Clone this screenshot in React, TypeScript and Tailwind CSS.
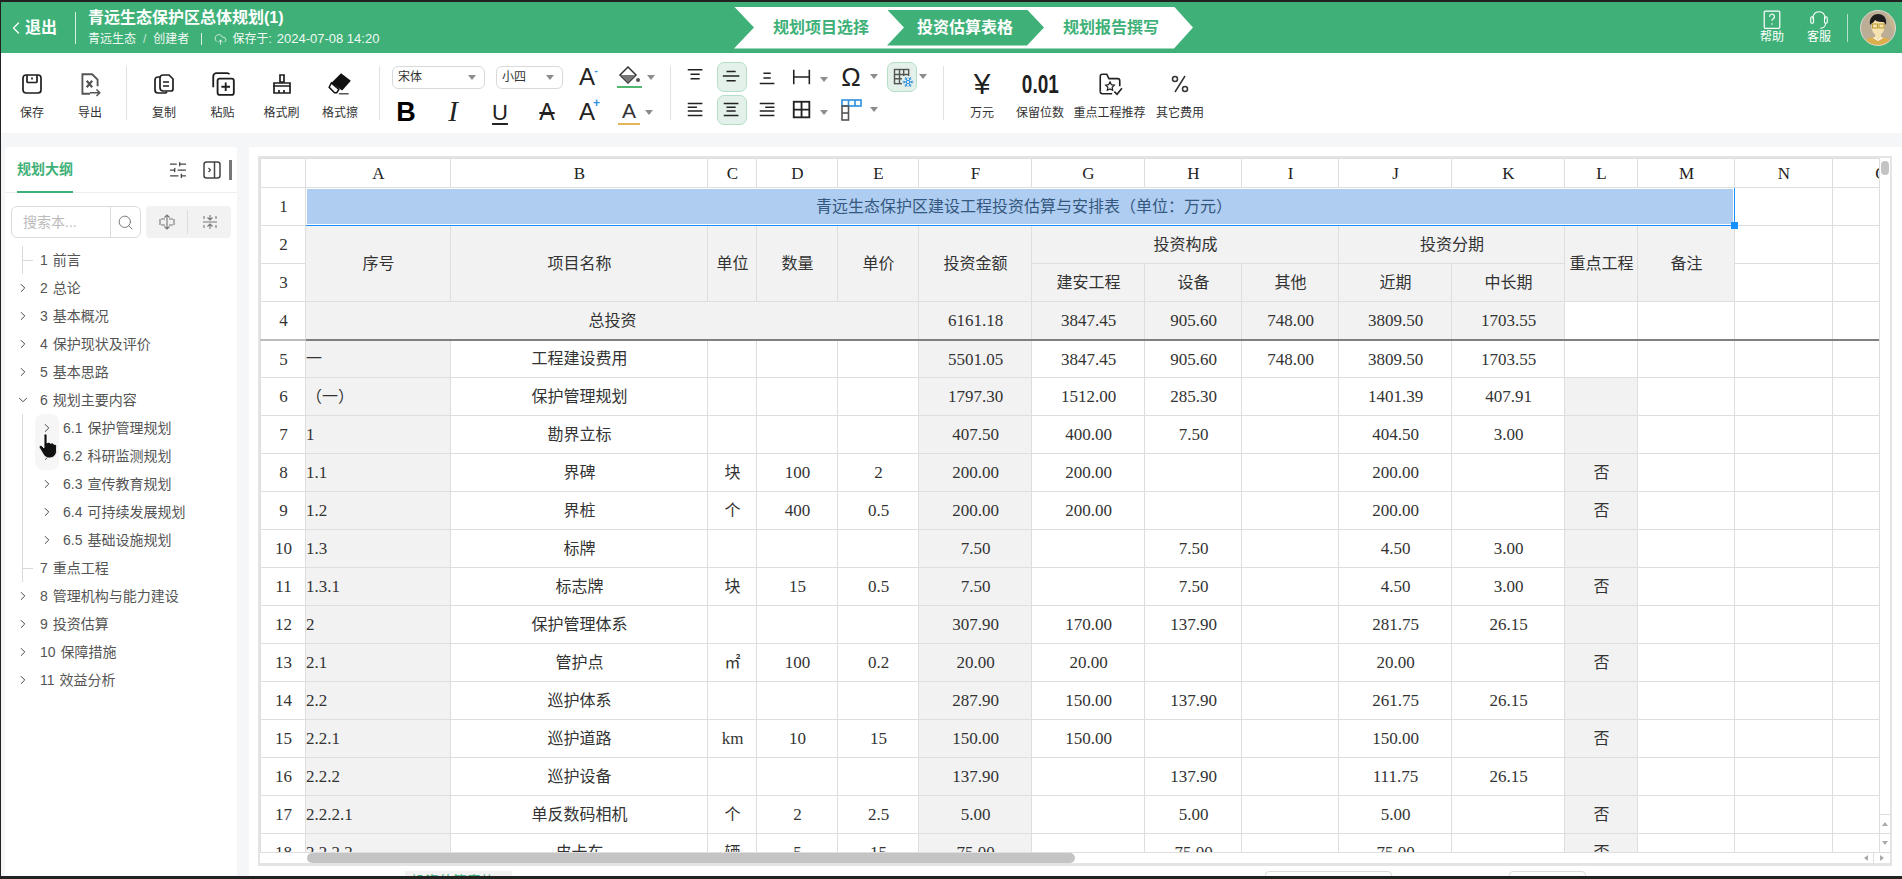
import React from 'react'
import { ChevronRight, ChevronDown, ChevronLeft, Search, SlidersHorizontal, Snowflake, CloudUpload } from 'lucide-react'

const sans = "[font-family:'Liberation_Sans','Noto_Sans_CJK_SC',sans-serif]"
const serif = "[font-family:'Liberation_Serif','Noto_Sans_CJK_SC',serif]"

function Ic({ size = 24, children, className = '' }: { size?: number; children: React.ReactNode; className?: string }) {
   return (
      <svg width={size} height={size} viewBox="0 0 24 24" fill="none" stroke="currentColor" strokeWidth={1.7} className={className}>
         {children}
      </svg>
   )
}

function Caret() {
   return <span className="inline-block h-0 w-0 border-x-[4px] border-t-[5px] border-x-transparent border-t-[#8c8c8c]" />
}

function ToolBtn({ label, width = 58, children }: { label: string; width?: number; children: React.ReactNode }) {
   return (
      <div className="mt-[5px] flex shrink-0 flex-col items-center" style={{ width }}>
         <div className="flex h-[28px] items-center justify-center text-[#1f1f1f]">{children}</div>
         <span className="mt-[7px] whitespace-nowrap text-[12px] leading-[16px] text-[#333]">{label}</span>
      </div>
   )
}

function Sep({ className = '' }: { className?: string }) {
   return <div className={'h-[54px] w-px shrink-0 bg-[#e2e2e2] ' + className} />
}

function FontSelect({ label, className }: { label: string; className: string }) {
   return (
      <div className={'flex h-[23px] items-center justify-between rounded-[6px] border border-[#d9d9d9] pl-[5px] pr-[8px] text-[12px] text-[#333] ' + className}>
         {label}
         <Caret />
      </div>
   )
}

function Letter({ children, className = '' }: { children: React.ReactNode; className?: string }) {
   return <span className={'flex h-[26px] w-[24px] items-center justify-center text-[#222] ' + className}>{children}</span>
}

function Header() {
   return (
      <div className="flex h-[51px] shrink-0 items-center bg-[#3fb178] text-white">
         <div className="flex w-[74px] items-center pl-[5px]">
            <ChevronLeft size={20} strokeWidth={1.5} className="-mr-[1px]" />
            <span className="text-[16px] font-bold">退出</span>
         </div>
         <div className="h-[32px] w-px bg-white/80" />
         <div className="ml-[12px] w-[646px]">
            <div className="text-[16px] font-bold leading-[20px]">青远生态保护区总体规划(1)</div>
            <div className="mt-[3px] flex items-center text-[12px] leading-[16px] text-white/95">
               青远生态<span className="mx-[7px] text-white/70">/</span>创建者
               <span className="ml-[12px] mr-[12px] h-[12px] w-px bg-white/80" />
               <CloudUpload size={13} strokeWidth={1.4} className="mr-[5px]" />
               保存于:<span className="ml-[5px] text-[13px]">2024-07-08 14:20</span>
            </div>
         </div>
         <div className="flex h-[42px] w-[459px] items-center bg-white text-[16px] font-semibold text-[#3fb178] [clip-path:polygon(0_0,440px_0,459px_50%,440px_100%,0_100%,20px_50%)]">
            <span className="w-[153px] pl-[39px]">规划项目选择</span>
            <span className="flex h-[36px] w-[157px] items-center bg-[#3fb178] pl-[30px] text-white [clip-path:polygon(0_0,140px_0,157px_50%,140px_100%,0_100%,17px_50%)]">投资估算表格</span>
            <span className="pl-[19px]">规划报告撰写</span>
         </div>
         <div className="ml-[557px] flex w-[44px] flex-col items-center">
            <svg width="20" height="20" viewBox="0 0 18 18" fill="none" stroke="white" strokeWidth="1.1">
               <rect x="2" y="1" width="14" height="15.500" rx="1" />
               <path d="M6.800 6a2.200 2.200 0 1 1 3.300 1.900c-.7.4-1.100.8-1.100 1.700" />
               <path d="M9 12v1.200" />
            </svg>
            <span className="text-[12px] leading-[15px]">帮助</span>
         </div>
         <div className="ml-[3px] flex w-[44px] flex-col items-center">
            <svg width="22" height="20" viewBox="0 0 20 18" fill="none" stroke="white" strokeWidth="1">
               <path d="M4.500 8c0-4 2.200-6.500 5.500-6.500S15.500 4 15.500 8" />
               <rect x="2.500" y="6" width="2.500" height="6" rx="1.200" />
               <rect x="15" y="6" width="2.500" height="6" rx="1.200" />
               <path d="M16 12c0 2.500-2 4.500-5 4.500" />
            </svg>
            <span className="text-[12px] leading-[15px]">客服</span>
         </div>
         <div className="ml-[6px] h-[28px] w-px bg-white/60" />
         <svg width="36" height="36" viewBox="0 0 36 36" className="ml-[12px]">
            <defs>
               <clipPath id="avatar-clip"><circle cx="18" cy="18" r="17.500" /></clipPath>
            </defs>
            <g clipPath="url(#avatar-clip)">
               <rect width="36" height="36" fill="#bcae96" />
               <path d="M24 0h12v26z" fill="#c7b68f" />
               <path d="M3 36c0-7 7-9 15-9s15 2 15 9z" fill="#dcae4c" />
               <path d="M15 22h6v6l-3 2-3-2z" fill="#f6e2ae" />
               <path d="M14 27l4 3 4-3 1 1-5 3-5-3z" fill="#fff" />
               <ellipse cx="18" cy="17" rx="6.500" ry="8" fill="#f6e2ae" />
               <path d="M10 15c-1-7 3-11 8-11 6 0 9 4 8 11l-2-3c-3 0-7 0-9-2-1 2-2 3-3 3z" fill="#1c1c1c" />
               <rect x="12.500" y="14" width="5" height="4" fill="none" stroke="#b99a2e" strokeWidth="1" />
               <rect x="19" y="14" width="5" height="4" fill="none" stroke="#b99a2e" strokeWidth="1" />
            </g>
            <circle cx="18" cy="18" r="17.500" fill="none" stroke="#d8d8d0" strokeWidth="1" />
         </svg>
      </div>
   )
}

function Toolbar() {
   return (
      <div className={'flex h-[80px] shrink-0 items-center bg-white pl-[2px]'}>
         <ToolBtn label="保存">
            <Ic size={24}>
               <rect x="3" y="3" width="18" height="18" rx="3" />
               <path d="M7 3v6.500a1 1 0 0 0 1 1h8a1 1 0 0 0 1-1V3" />
               <path d="M12 5.500v2" />
            </Ic>
         </ToolBtn>
         <ToolBtn label="导出">
            <Ic size={26} className="text-[#555]">
               <path d="M12 21H5V3h9l5 5v6" />
               <path d="M9 9l5 6M14 9l-5 6" strokeWidth={2} />
               <path d="M12 20h9M18 17l3 3-3 3" strokeWidth={1.4} />
            </Ic>
         </ToolBtn>
         <Sep className="ml-[7px] mr-[8px]" />
         <ToolBtn label="复制">
            <Ic size={24}>
               <path d="M8 5H6a3 3 0 0 0-3 3v10a3 3 0 0 0 3 3h7a3 3 0 0 0 2-1" />
               <path d="M11 3h6l4 4v10a2 2 0 0 1-2 2h-8a3 3 0 0 1-3-3V6a3 3 0 0 1 3-3z" />
               <path d="M11 10h6M11 14h6" />
            </Ic>
         </ToolBtn>
         <ToolBtn label="粘贴" width={59}>
            <Ic size={26}>
               <path d="M3 15V5a3 3 0 0 1 3-3h10a3 3 0 0 1 2 1" />
               <rect x="7" y="7" width="15" height="15" rx="2" />
               <path d="M14.500 10.500v8M10.500 14.500h8" />
            </Ic>
         </ToolBtn>
         <ToolBtn label="格式刷" width={59}>
            <Ic size={24}>
               <path d="M10 3h4v7h-4z" />
               <path d="M4 11h16v3H4z" />
               <path d="M4 14v7h16v-7" />
               <path d="M9 21v-3M14 21v-3" />
            </Ic>
         </ToolBtn>
         <ToolBtn label="格式擦">
            <svg width="26" height="26" viewBox="0 0 24 24">
               <path d="M13 2l9 7-8 9-10-7z" fill="#111" />
               <path d="M4 11l7 6-2 3H7l-5-5z" fill="#fff" stroke="#111" strokeWidth="1.400" />
               <path d="M11 21h9" stroke="#555" strokeWidth="1.400" />
            </svg>
         </ToolBtn>
         <Sep className="ml-[10px] mr-[12px]" />

         <div className="mt-[3px] flex w-[266px] shrink-0 flex-col gap-[9px]">
            <div className="flex h-[26px] items-center">
               <FontSelect label="宋体" className="w-[93px]" />
               <FontSelect label="小四" className="ml-[11px] w-[67px]" />
               <Letter className="relative ml-[12px] text-[24px] font-light">A<span className="absolute right-[1px] top-[1px] text-[11px] font-bold leading-none text-[#2f8fe0]">-</span></Letter>
               <span className="ml-[16px] flex w-[28px] flex-col items-center">
                  <svg width="24" height="20" viewBox="0 0 24 20">
                     <path d="M11 1l8 8-8 8-8-8z" fill="#fff" stroke="#333" strokeWidth="1.500" />
                     <path d="M3.500 9h15l-7.500 7.500z" fill="#777" />
                     <circle cx="21" cy="14" r="2" fill="#555" />
                  </svg>
                  <span className="h-[2px] w-[25px] bg-[#52b66e]" />
               </span>
               <span className="ml-[3px] flex w-[10px] justify-center"><Caret /></span>
            </div>
            <div className="flex h-[26px] items-center pl-[2px]">
               <Letter className="text-[27px] font-bold text-black">B</Letter>
               <Letter className={'ml-[23px] text-[29px] italic ' + serif}>I</Letter>
               <Letter className="ml-[23px] text-[22px] underline underline-offset-[3px]">U</Letter>
               <Letter className="ml-[23px] text-[23px] font-light line-through">A</Letter>
               <Letter className="relative ml-[16px] text-[24px] font-light">A<span className="absolute right-[-1px] top-[-2px] text-[12px] font-bold leading-none text-[#2f8fe0]">+</span></Letter>
               <span className="ml-[18px] flex w-[24px] flex-col items-center text-[#333]">
                  <span className="text-[21px] font-light leading-[24px]">A</span>
                  <span className="h-[2px] w-[22px] bg-[#e3b65c]" />
               </span>
               <span className="ml-[3px] flex w-[10px] justify-center"><Caret /></span>
            </div>
         </div>
         <Sep className="ml-[12px] mr-[7px]" />

         <div className="grid shrink-0 grid-cols-[36px_36px_35px_34px_15px_44px_9px_30px_12px] grid-rows-[30px_30px] items-center gap-y-[3px] text-[#222]">
            <span className="flex justify-center"><Ic size={22}><path d="M3 4h16M6 9h10M6 14h10" /></Ic></span>
            <span className="mx-[3px] flex h-[30px] items-center justify-center rounded-[7px] border border-[#b5e0c8] bg-[#e3f1ea]"><Ic size={22}><path d="M6 6h10M2 11h18M6 16h10" /></Ic></span>
            <span className="flex justify-center"><Ic size={22}><path d="M7 8h8M7 13h8M3 19h16" /></Ic></span>
            <span className="flex justify-center"><Ic size={22}><path d="M3 4v16M20 4v16M3 12h17" /></Ic></span>
            <span className="pl-[1px]"><Caret /></span>
            <span className="flex items-center gap-[2px]"><span className="w-[36px] text-center text-[26px] leading-none">Ω</span><Caret /></span>
            <span />
            <span className="flex h-[30px] items-center justify-center rounded-[7px] border border-[#b5e0c8] bg-[#e3f1ea]">
               <span className="relative">
                  <Ic size={20} className="text-[#555]"><rect x="3" y="3" width="17" height="17" /><path d="M3 9h17M3 14h11M9 3v17M14 3v11" /></Ic>
                  <Snowflake size={12} strokeWidth={2} className="absolute -bottom-[1px] -right-[2px] bg-[#e3f1ea] text-[#2f8fe0]" />
               </span>
            </span>
            <span className="flex justify-center"><Caret /></span>

            <span className="flex justify-center"><Ic size={22}><path d="M3 5h16M3 9h10M3 13h16M3 18h16" /></Ic></span>
            <span className="mx-[3px] flex h-[30px] items-center justify-center rounded-[7px] border border-[#b5e0c8] bg-[#e3f1ea]"><Ic size={22}><path d="M3 5h16M6 9h10M6 13h10M3 18h16" /></Ic></span>
            <span className="flex justify-center"><Ic size={22}><path d="M3 5h16M9 9h10M3 13h16M3 18h16" /></Ic></span>
            <span className="flex justify-center"><Ic size={22}><rect x="3" y="3" width="17" height="17" strokeWidth={2} /><path d="M11.500 3v17M3 11.500h17" strokeWidth={2} /></Ic></span>
            <span className="pl-[1px]"><Caret /></span>
            <span className="flex items-center gap-[2px]">
               <span className="flex w-[36px] justify-center">
                  <svg width="22" height="24" viewBox="0 0 22 24" fill="none" strokeWidth="1.600">
                     <rect x="2" y="2" width="19" height="6" stroke="#2f8fe0" />
                     <path d="M8.500 2v6M15 2v6" stroke="#2f8fe0" />
                     <rect x="2" y="8" width="6.500" height="14" stroke="#555" />
                     <path d="M2 15h6.500" stroke="#555" />
                  </svg>
               </span>
               <Caret />
            </span>
         </div>
         <Sep className="ml-[14px] mr-[9px]" />
         <ToolBtn label="万元">
            <span className="text-[30px] leading-none">¥</span>
         </ToolBtn>
         <ToolBtn label="保留位数">
            <span className="text-[25px] font-bold leading-none [transform:scaleX(.76)]">0.01</span>
         </ToolBtn>
         <ToolBtn label="重点工程推荐" width={81}>
            <svg width="26" height="26" viewBox="0 0 24 24" fill="none" stroke="#222" strokeWidth="1.500">
               <path d="M3 19V5a2 2 0 0 1 2-2h4l2 4h8a2 2 0 0 1 2 2v5" />
               <path d="M3 19a2 2 0 0 0 2 2h9" />
               <path d="M12 10l1.300 2.600 2.700.4-2 2 .5 2.800-2.500-1.300-2.500 1.300.5-2.800-2-2 2.700-.4z" strokeWidth="1.100" />
               <path d="M16 19l2.500 2.500L23 16" />
            </svg>
         </ToolBtn>
         <ToolBtn label="其它费用" width={60}>
            <svg width="22" height="22" viewBox="0 0 22 22" fill="none" stroke="#333" strokeWidth="1.500">
               <path d="M16 3L6 19" />
               <circle cx="6" cy="6" r="2.500" />
               <circle cx="16" cy="16" r="2.500" />
            </svg>
         </ToolBtn>
      </div>
   )
}

const outline = [
   { no: '2', name: '总论' },
   { no: '3', name: '基本概况' },
   { no: '4', name: '保护现状及评价' },
   { no: '5', name: '基本思路' },
]
const children = [
   { no: '6.1', name: '保护管理规划' },
   { no: '6.2', name: '科研监测规划' },
   { no: '6.3', name: '宣传教育规划' },
   { no: '6.4', name: '可持续发展规划' },
   { no: '6.5', name: '基础设施规划' },
]
const tail = [
   { no: '8', name: '管理机构与能力建设' },
   { no: '9', name: '投资估算' },
   { no: '10', name: '保障措施' },
   { no: '11', name: '效益分析' },
]

function TreeRow({ no, name, open, leaf }: { no: string; name: string; open?: boolean; leaf?: boolean }) {
   return (
      <div className="relative flex h-[28px] items-center text-[14px] text-[#555]">
         <span className="flex w-[35px] justify-start pl-[11px] text-[#444]">
            {leaf ? <span className="ml-[6px] mt-0 h-px w-[11px] bg-[#d9d9d9]" /> : open ? <ChevronDown size={14} strokeWidth={1.7} /> : <ChevronRight size={14} strokeWidth={1.7} />}
         </span>
         <span>{no}</span>
         <span className="ml-[5px]">{name}</span>
      </div>
   )
}

function Sidebar() {
   return (
      <div className="w-[232px] shrink-0 rounded-t-[3px] bg-white">
         <div className="flex h-[46px] items-center border-b border-[#eee] pl-[12px]">
            <span className="flex h-[46px] w-[56px] items-center border-b-2 border-[#3fb178] pt-[2px] text-[14px] font-bold text-[#3fb178]">规划大纲</span>
            <SlidersHorizontal size={20} strokeWidth={1.5} className="ml-[95px] text-[#444]" />
            <svg width="20" height="20" viewBox="0 0 20 20" fill="none" stroke="#444" strokeWidth="1.500" className="ml-[14px]">
               <rect x="2" y="2" width="16" height="16" rx="2.500" />
               <path d="M12.500 2v16" />
               <path d="M6.500 8l2 2-2 2" strokeWidth="1.200" />
            </svg>
            <span className="ml-[7px] h-[20px] w-[3px] bg-[#777]" />
         </div>
         <div className="ml-[6px] mt-[13px] flex h-[32px] items-center">
            <div className="flex h-[32px] w-[130px] items-center rounded-[6px] border border-[#dcdcdc] text-[14px] text-[#bbb]">
               <span className="w-[98px] pl-[11px]">搜索本...</span>
               <span className="flex h-full flex-1 items-center justify-center border-l border-[#dcdcdc] text-[#777]"><Search size={17} strokeWidth={1.4} /></span>
            </div>
            <div className="ml-[5px] flex h-[32px] w-[85px] items-center rounded-[4px] bg-[#f2f2f2] text-[#777]">
               <span className="flex h-[24px] w-[42px] items-center justify-center border-r border-[#ddd]">
                  <svg width="18" height="18" viewBox="0 0 18 18" fill="none" stroke="currentColor" strokeWidth="1.100"><path d="M3 6h4M11 6h4M3 12h4M11 12h4M2 6v6M16 6v6M9 3v12M6.500 4.500L9 2l2.500 2.500M6.500 13.500L9 16l2.500-2.500" /></svg>
               </span>
               <span className="flex flex-1 items-center justify-center">
                  <svg width="18" height="18" viewBox="0 0 18 18" fill="none" stroke="currentColor" strokeWidth="1.100"><path d="M2 9h14M3 3v3M15 3v3M3 12v3M15 12v3M9 2v5M9 11v5M6.500 4.500L9 7l2.500-2.500M6.500 13.500L9 11l2.500 2.500" /></svg>
               </span>
            </div>
         </div>
         <div className="mt-[8px]">
            <div className="relative">
               <span className="absolute left-[17px] top-0 h-[28px] w-px bg-[#d9d9d9]" />
               <TreeRow no="1" name="前言" leaf />
            </div>
            {outline.map((item) => <TreeRow key={item.no} no={item.no} name={item.name} />)}
            <TreeRow no="6" name="规划主要内容" open />
            <div className="relative">
               <span className="absolute left-[17px] top-0 h-[168px] w-px bg-[#d9d9d9]" />
               {children.map((item, i) => (
                  <div key={item.no} className="relative flex h-[28px] items-center pl-[30px] text-[14px] text-[#555]">
                     <span className={'flex h-[28px] w-[24px] items-center justify-center text-[#444] ' + (i === 0 ? 'rounded-t-[8px] bg-[#f6f6f6]' : i === 1 ? 'rounded-b-[8px] bg-[#f6f6f6]' : '')}>
                        <ChevronRight size={14} strokeWidth={1.7} />
                     </span>
                     <span className="ml-[4px]">{item.no}</span>
                     <span className="ml-[5px]">{item.name}</span>
                     {i === 1 && (
                        <svg width="20" height="26" viewBox="0 0 20 26" className="absolute left-[33px] -top-[9px]">
                           <path d="M6 2.500c0-2 3-2 3 0V10c1-1 3-1 3.500.5 1-1 3-.8 3.500 1 1-.6 2.500 0 2.500 2V18c0 4-3 7-7 7-3.500 0-5.500-2-7-5l-3-5c-1-2 1-3.500 2.500-2L6 15z" fill="#111" stroke="#fff" strokeWidth=".8" />
                        </svg>
                     )}
                  </div>
               ))}
               <TreeRow no="7" name="重点工程" leaf />
            </div>
            {tail.map((item) => <TreeRow key={item.no} no={item.no} name={item.name} />)}
         </div>
      </div>
   )
}

const colWidths = [45, 145, 257, 49, 81, 81, 113, 113, 97, 97, 113, 113, 73, 97, 98, 97]
const letters = ['', 'A', 'B', 'C', 'D', 'E', 'F', 'G', 'H', 'I', 'J', 'K', 'L', 'M', 'N', 'O']

// no, name, unit, qty, price, total, 建安, 设备, 其他, 近期, 中长期, 重点
const rows: string[][] = [
   ['一', '工程建设费用', '', '', '', '5501.05', '3847.45', '905.60', '748.00', '3809.50', '1703.55', ''],
   ['（一）', '保护管理规划', '', '', '', '1797.30', '1512.00', '285.30', '', '1401.39', '407.91', ''],
   ['1', '勘界立标', '', '', '', '407.50', '400.00', '7.50', '', '404.50', '3.00', ''],
   ['1.1', '界碑', '块', '100', '2', '200.00', '200.00', '', '', '200.00', '', '否'],
   ['1.2', '界桩', '个', '400', '0.5', '200.00', '200.00', '', '', '200.00', '', '否'],
   ['1.3', '标牌', '', '', '', '7.50', '', '7.50', '', '4.50', '3.00', ''],
   ['1.3.1', '标志牌', '块', '15', '0.5', '7.50', '', '7.50', '', '4.50', '3.00', '否'],
   ['2', '保护管理体系', '', '', '', '307.90', '170.00', '137.90', '', '281.75', '26.15', ''],
   ['2.1', '管护点', '㎡', '100', '0.2', '20.00', '20.00', '', '', '20.00', '', '否'],
   ['2.2', '巡护体系', '', '', '', '287.90', '150.00', '137.90', '', '261.75', '26.15', ''],
   ['2.2.1', '巡护道路', 'km', '10', '15', '150.00', '150.00', '', '', '150.00', '', '否'],
   ['2.2.2', '巡护设备', '', '', '', '137.90', '', '137.90', '', '111.75', '26.15', ''],
   ['2.2.2.1', '单反数码相机', '个', '2', '2.5', '5.00', '', '5.00', '', '5.00', '', '否'],
   ['2.2.2.2', '皮卡车', '辆', '5', '15', '75.00', '', '75.00', '', '75.00', '', '否'],
]

const cell = 'border border-[#dedede] pl-[1px] pt-[1px] text-center align-middle overflow-hidden whitespace-nowrap'
const gray = ' bg-[#f2f2f2]'
const thick = ' border-b-2 border-b-[#808080]'

function Sheet() {
   return (
      <div className="ml-[9px] mr-[10px] mt-[9px] grid h-[710px] grid-cols-[1fr_11px] grid-rows-[1fr_11px] overflow-hidden border-b-[3px] border-l-2 border-r-2 border-t-2 border-[#e4e4e4] bg-white">
         <div className="overflow-hidden">
            <table className={'w-[1669px] table-fixed border-collapse text-[17px] text-[#333] ' + serif}>
               <colgroup>
                  {colWidths.map((w, i) => <col key={i} style={{ width: w }} />)}
               </colgroup>
               <tbody>
                  <tr className="h-[29px]">
                     {letters.map((l, i) => <td key={i} className={cell + ' text-[#222]'}>{l}</td>)}
                  </tr>
                  <tr className="h-[38px]">
                     <td className={cell}>1</td>
                     <td colSpan={13} className={'relative border border-[#dedede] bg-[#aecdf0] pl-[8px] pt-[1px] text-center align-middle text-[16px] text-[#35587f] shadow-[inset_0_0_0_1px_white]'}>
                        青远生态保护区建设工程投资估算与安排表（单位：万元）
                        <span className="absolute -bottom-px left-0 h-px w-full bg-[#1890ff]" />
                        <span className="absolute -right-px top-0 h-full w-px bg-[#1890ff]" />
                        <span className="absolute -bottom-[4px] -right-[4px] h-[7px] w-[7px] bg-[#1890ff]" />
                     </td>
                     <td className={cell} />
                     <td className={cell} />
                  </tr>
                  <tr className="h-[38px]">
                     <td className={cell}>2</td>
                     <td rowSpan={2} className={cell + gray + ' text-[16px]'}>序号</td>
                     <td rowSpan={2} className={cell + gray + ' text-[16px]'}>项目名称</td>
                     <td rowSpan={2} className={cell + gray + ' text-[16px]'}>单位</td>
                     <td rowSpan={2} className={cell + gray + ' text-[16px]'}>数量</td>
                     <td rowSpan={2} className={cell + gray + ' text-[16px]'}>单价</td>
                     <td rowSpan={2} className={cell + gray + ' text-[16px]'}>投资金额</td>
                     <td colSpan={3} className={cell + gray + ' text-[16px]'}>投资构成</td>
                     <td colSpan={2} className={cell + gray + ' text-[16px]'}>投资分期</td>
                     <td rowSpan={2} className={cell + gray + ' text-[16px]'}>重点工程</td>
                     <td rowSpan={2} className={cell + gray + ' text-[16px]'}>备注</td>
                     <td className={cell} />
                     <td className={cell} />
                  </tr>
                  <tr className="h-[38px]">
                     <td className={cell}>3</td>
                     {['建安工程', '设备', '其他', '近期', '中长期'].map((t) => <td key={t} className={cell + gray + ' text-[16px]'}>{t}</td>)}
                     <td className={cell} />
                     <td className={cell} />
                  </tr>
                  <tr className="h-[38px]">
                     <td className={cell + ' border-b-2 border-b-[#bdbdbd]'}>4</td>
                     <td colSpan={5} className={cell + gray + thick + ' text-[16px]'}>总投资</td>
                     {['6161.18', '3847.45', '905.60', '748.00', '3809.50', '1703.55'].map((t, i) => <td key={i} className={cell + gray + thick}>{t}</td>)}
                     {[0, 1, 2, 3].map((i) => <td key={i} className={cell + thick} />)}
                  </tr>
                  {rows.map((r, i) => (
                     <tr key={i} className="h-[38px]">
                        <td className={cell}>{i + 5}</td>
                        <td className={cell + gray + ' !pl-0 !text-left' + (/^[一（]/.test(r[0]) ? ' text-[16px]' : '')}>{r[0]}</td>
                        <td className={cell + ' text-[16px]'}>{r[1]}</td>
                        <td className={cell + (/[a-z]/.test(r[2]) ? '' : ' text-[16px]')}>{r[2]}</td>
                        <td className={cell}>{r[3]}</td>
                        <td className={cell}>{r[4]}</td>
                        <td className={cell + gray}>{r[5]}</td>
                        <td className={cell}>{r[6]}</td>
                        <td className={cell}>{r[7]}</td>
                        <td className={cell}>{r[8]}</td>
                        <td className={cell}>{r[9]}</td>
                        <td className={cell}>{r[10]}</td>
                        <td className={cell + ' text-[16px]' + (i === 0 ? '' : gray)}>{r[11]}</td>
                        <td className={cell} />
                        <td className={cell} />
                        <td className={cell} />
                     </tr>
                  ))}
               </tbody>
            </table>
         </div>
         <div className="flex flex-col items-center border-l border-[#dedede] bg-white">
            <span className="mt-[3px] h-[14px] w-[8px] rounded-full bg-[#c4c4c4]" />
            <span className="mt-auto flex h-[19px] w-full items-center justify-center border-t border-[#dedede]"><span className="h-0 w-0 border-x-[3px] border-b-[4px] border-x-transparent border-b-[#aaa]" /></span>
            <span className="flex h-[19px] w-full items-center justify-center border-t border-[#dedede]"><span className="h-0 w-0 border-x-[3px] border-t-[4px] border-x-transparent border-t-[#aaa]" /></span>
         </div>
         <div className="col-span-2 flex items-center border-t border-[#dedede] bg-white">
            <span className="ml-[47px] h-[10px] w-[768px] rounded-full bg-[#c4c4c4]" />
            <span className="ml-auto flex h-full w-[16px] items-center justify-center border-r border-[#dedede]"><span className="h-0 w-0 border-y-[3px] border-r-[4px] border-y-transparent border-r-[#aaa]" /></span>
            <span className="flex h-full w-[16px] items-center justify-center"><span className="h-0 w-0 border-y-[3px] border-l-[4px] border-y-transparent border-l-[#aaa]" /></span>
         </div>
      </div>
   )
}

export default function App() {
   return (
      <div className={'flex h-screen w-full flex-col overflow-hidden bg-[#222] pb-[3px] pl-px pt-[2px] ' + sans}>
         <Header />
         <Toolbar />
         <div className="flex min-h-0 flex-1 gap-[12px] overflow-hidden bg-[#f5f6f8] pl-[4px] pt-[14px]">
            <Sidebar />
            <div className="min-w-0 flex-1 bg-white">
               <Sheet />
               <div className="relative h-[10px] overflow-hidden">
                  <span className="absolute left-[156px] top-[5px] h-[20px] w-[107px] bg-[#f2f2f2] pl-[6px] text-[14px] leading-[20px] text-[#3fb178]">投资估算表格</span>
                  <span className="absolute left-[1016px] top-[5px] h-[20px] w-[127px] rounded-t-[4px] border border-[#dcdcdc]" />
                  <span className="absolute left-[1260px] top-[5px] h-[20px] w-[77px] rounded-t-[4px] border border-[#dcdcdc]" />
               </div>
            </div>
         </div>
      </div>
   )
}
